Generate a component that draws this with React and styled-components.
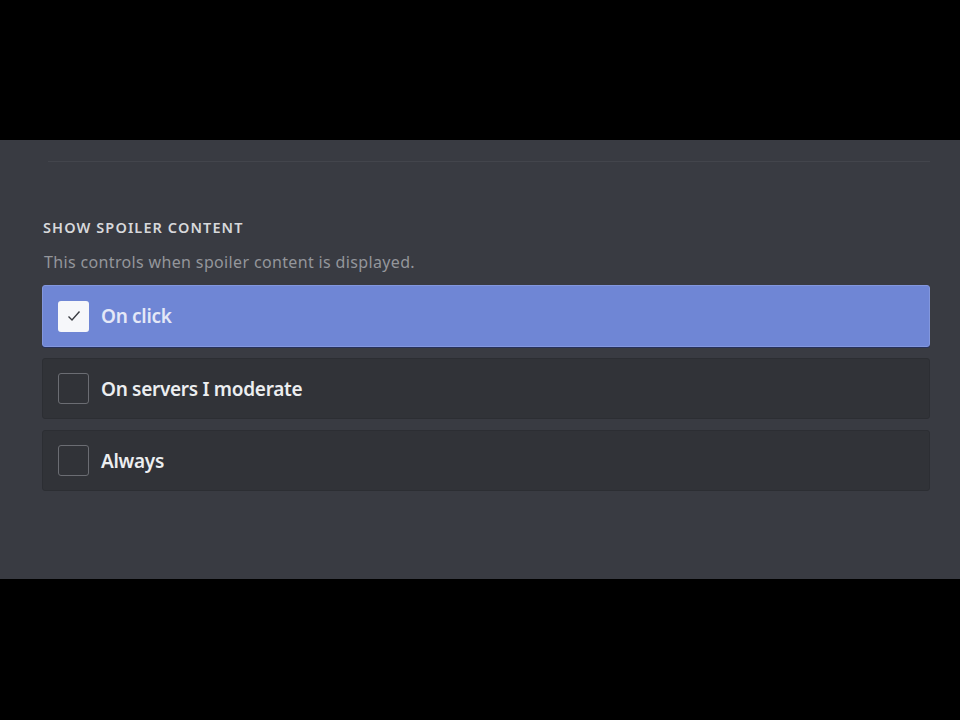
import React, { useState } from "react";
import styled, { createGlobalStyle } from "styled-components";

const GlobalStyle = createGlobalStyle`
  html, body {
    margin: 0;
    padding: 0;
    background: #000;
  }
  body {
    font-family: "Noto Sans", "Open Sans", sans-serif;
  }
`;

const Screen = styled.div`
  width: 960px;
  height: 720px;
  display: flex;
  flex-direction: column;
  background: #000;
`;

const Letterbox = styled.div`
  height: ${(p) => p.$h}px;
  flex-shrink: 0;
  background: #000;
`;

const Panel = styled.section`
  height: 439px;
  background: #393b42;
  padding: 21px 30px 0 42px;
  box-sizing: border-box;
  display: flex;
  flex-direction: column;
`;

const Divider = styled.hr`
  margin: 0 0 0 6px;
  border: none;
  height: 1px;
  background: #43454c;
`;

const Heading = styled.h5`
  margin: 56px 0 0 1px;
  font-size: 14.5px;
  font-weight: 600;
  letter-spacing: 1.1px;
  color: #d7d8db;
  line-height: 18px;
`;

const Description = styled.p`
  margin: 17px 0 0 2px;
  font-size: 16px;
  letter-spacing: 0.35px;
  color: #94969b;
  line-height: 18px;
`;

const Options = styled.div`
  margin-top: 14px;
  display: flex;
  flex-direction: column;
  gap: 11px;
`;

const Option = styled.label`
  height: ${(p) => (p.$selected ? 62 : 61)}px;
  box-sizing: border-box;
  display: flex;
  align-items: center;
  gap: 12px;
  padding: 0 15px;
  border-radius: 3px;
  cursor: pointer;
  background: ${(p) => (p.$selected ? "#6f86d5" : "#313338")};
  border: 1px solid ${(p) => (p.$selected ? "#8397dd" : "#2c2e33")};
  box-shadow: ${(p) => (p.$selected ? "0 1px 0 #26315c" : "none")};
`;

const Box = styled.span`
  width: 31px;
  height: 31px;
  box-sizing: border-box;
  border-radius: 3px;
  display: flex;
  align-items: center;
  justify-content: center;
  background: ${(p) => (p.$checked ? "#f6f7fa" : "transparent")};
  border: ${(p) => (p.$checked ? "none" : "1.5px solid #6b6d73")};
`;

const Label = styled.span`
  font-size: 19px;
  font-weight: 600;
  color: ${(p) => (p.$selected ? "#e4e8f7" : "#eceef0")};
  letter-spacing: -0.3px;
`;

const options = ["On click", "On servers I moderate", "Always"];

export default function App() {
  const [selected, setSelected] = useState(0);

  return (
    <>
      <GlobalStyle />
      <Screen>
        <Letterbox $h={140} />
        <Panel>
          <Divider />
          <Heading>SHOW SPOILER CONTENT</Heading>
          <Description>This controls when spoiler content is displayed.</Description>
          <Options>
            {options.map((opt, i) => (
              <Option key={opt} $selected={selected === i} onClick={() => setSelected(i)}>
                <Box $checked={selected === i}>
                  {selected === i && (
                    <svg width="18" height="18" viewBox="0 0 18 18">
                      <path d="M3.5 9.5 L7 13 L14.5 4.5" fill="none" stroke="#3a3c42" strokeWidth="1.4" />
                    </svg>
                  )}
                </Box>
                <Label $selected={selected === i}>{opt}</Label>
              </Option>
            ))}
          </Options>
        </Panel>
        <Letterbox $h={141} />
      </Screen>
    </>
  );
}
